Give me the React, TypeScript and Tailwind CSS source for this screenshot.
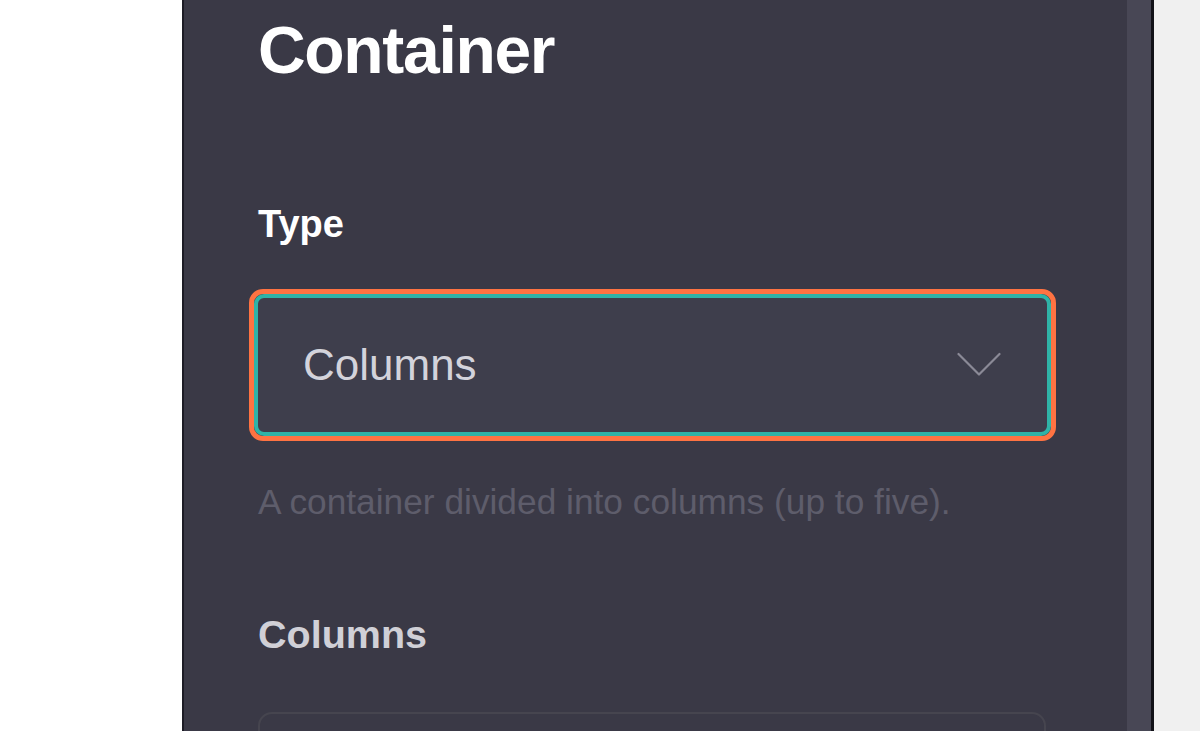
import React from 'react';

const ChevronDown: React.FC = () => (
  <svg width="44" height="26" viewBox="0 0 44 26" fill="none">
    <path d="M1.5 2 L22 22.5 L42.5 2" stroke="#8b8a97" strokeWidth="2.2" strokeLinecap="round" strokeLinejoin="round" />
  </svg>
);

export default function App() {
  return (
    <div
      className="flex h-[731px] w-[1200px] overflow-hidden bg-white"
      style={{ fontFamily: '"Liberation Sans", Arial, sans-serif' }}
    >
      <div className="w-[182px] shrink-0 bg-white" />
      <div className="w-[2px] shrink-0 bg-[#1d1c26]" />

      {/* settings panel */}
      <div className="flex w-[943px] shrink-0 flex-col bg-[#3a3946] px-[74px]">
        <h1 className="mt-[17px] shrink-0 text-[66px] font-bold leading-none tracking-[-0.02em] text-white">
          Container
        </h1>

        <label className="mt-[122px] shrink-0 text-[38px] font-bold leading-none text-white">
          Type
        </label>

        <div className="ml-[-9px] mt-[46px] h-[152px] w-[807px] shrink-0 rounded-[14px] border-[5px] border-[#ff7342]">
          <div className="flex h-full items-center justify-between rounded-[10px] border-[4px] border-[#2fb3a7] bg-[#3e3e4c] pl-[45px] pr-[46px]">
            <span className="text-[44px] leading-none text-[#d3d3db]">Columns</span>
            <ChevronDown />
          </div>
        </div>

        <p className="mt-[43px] shrink-0 text-[35.3px] leading-none text-[#5e5d6b]">
          A container divided into columns (up to five).
        </p>

        <label className="mt-[96px] shrink-0 text-[39.5px] font-bold leading-none text-[#d0d0d7]">
          Columns
        </label>

        <div className="mt-[57px] h-[120px] w-[788px] shrink-0 rounded-[14px] border-2 border-[#46454f]" />
      </div>

      {/* scrollbar */}
      <div className="w-[24px] shrink-0 bg-[#484755]" />
      <div className="w-[3px] shrink-0 bg-[#121218]" />
      <div className="flex-1 bg-[#f0f0f0]" />
    </div>
  );
}
